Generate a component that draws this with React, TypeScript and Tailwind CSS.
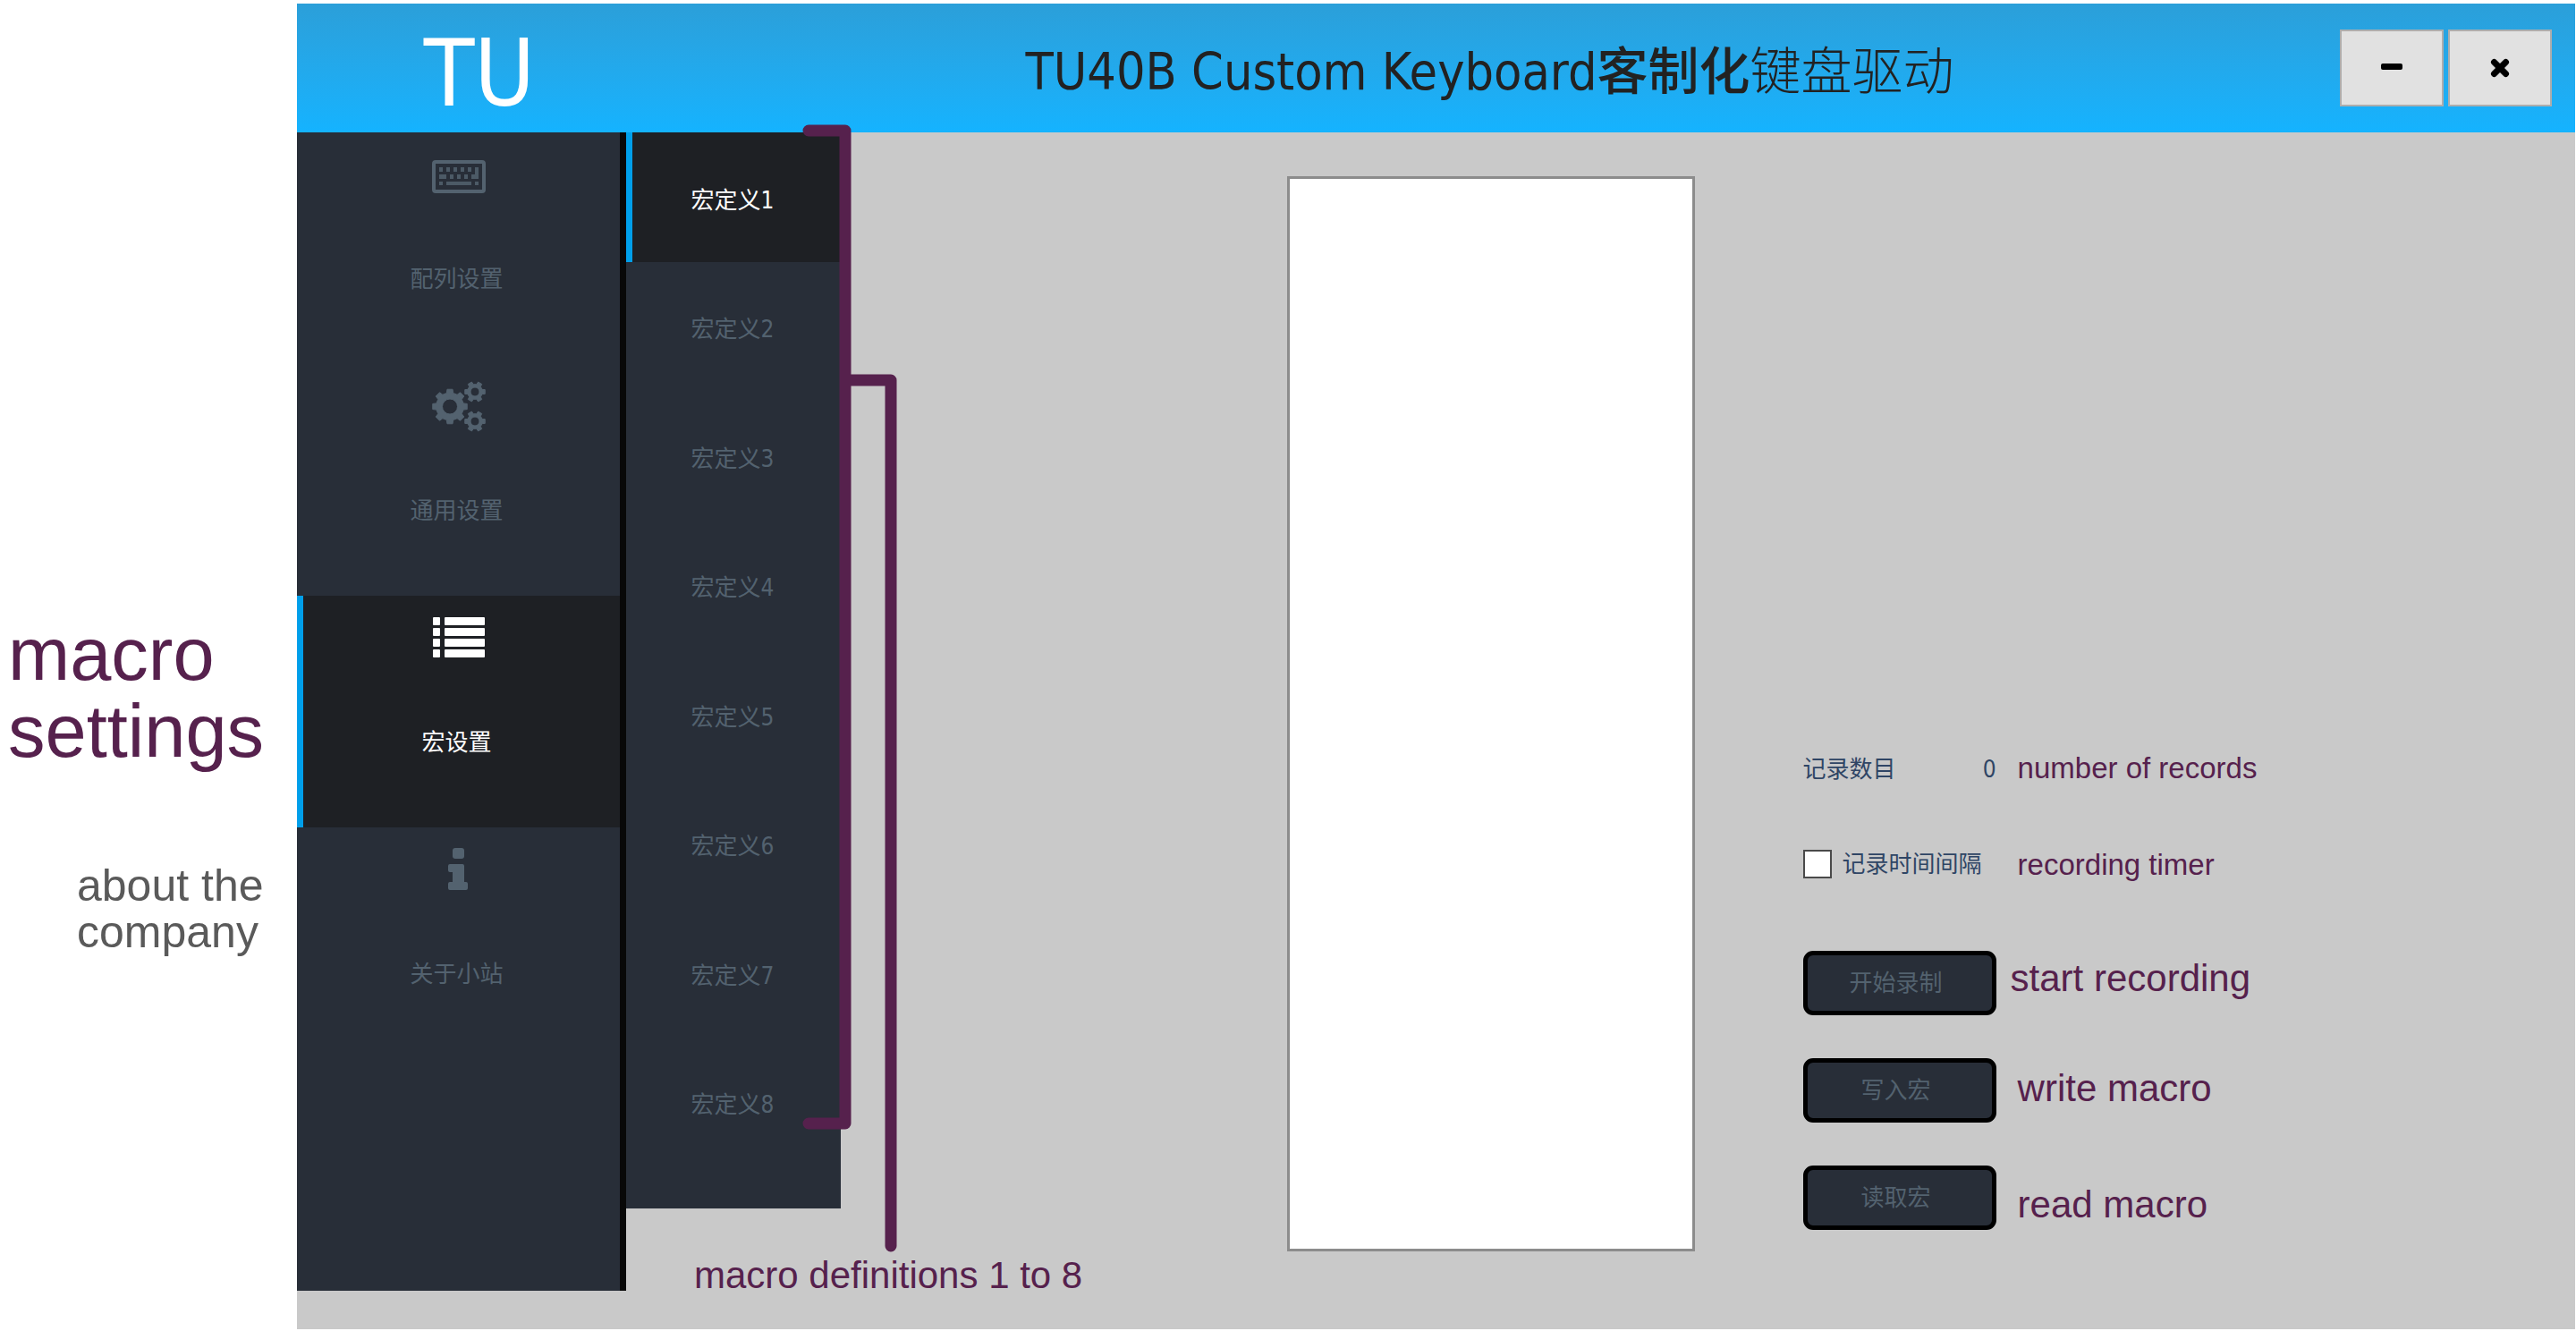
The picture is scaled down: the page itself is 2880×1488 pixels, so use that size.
import React from "react";

const UI_FONT = "font-['DejaVu_Sans_Condensed','DejaVu_Sans','Noto_Sans_CJK_SC',sans-serif]";
const NOTE_FONT = "font-['Liberation_Sans',Arial,sans-serif]";

/** Outline of a toothed wheel with a round hole, for fill-rule evenodd. */
function gearPath(cx: number, cy: number, outer: number, root: number, hole: number, teeth: number) {
  const step = (Math.PI * 2) / teeth;
  const points: string[] = [];
  for (let i = 0; i < teeth; i++) {
    const a = i * step;
    const corners: [number, number][] = [
      [root, -0.3],
      [outer, -0.2],
      [outer, 0.2],
      [root, 0.3],
    ];
    for (const [r, k] of corners) {
      points.push(`${(cx + r * Math.cos(a + k * step)).toFixed(2)} ${(cy + r * Math.sin(a + k * step)).toFixed(2)}`);
    }
  }
  return `M${points.join("L")}ZM${cx - hole} ${cy}a${hole} ${hole} 0 1 0 ${hole * 2} 0a${hole} ${hole} 0 1 0 ${-hole * 2} 0Z`;
}

function Icon({ children }: { children: React.ReactNode }) {
  return (
    <svg viewBox="0 0 60 60" className="h-[60px] w-[60px]" fill="currentColor" aria-hidden="true">
      {children}
    </svg>
  );
}

const KeyboardIcon = () => (
  <Icon>
    <rect x="2" y="14" width="56" height="33" rx="2" fill="none" stroke="currentColor" strokeWidth="4" />
    <g opacity="0.85">
      {[8, 16, 24, 32, 40].map((x) => (
        <rect key={x} x={x} y="20" width="4" height="5" />
      ))}
      <rect x="8" y="28" width="8" height="5" />
      {[20, 28, 36].map((x) => (
        <rect key={x} x={x} y="28" width="4" height="5" />
      ))}
      <path d="M48 20h4v13h-8v-5h4z" />
      <rect x="8" y="36" width="4" height="4" />
      <rect x="16" y="36" width="28" height="4" />
      <rect x="48" y="36" width="4" height="4" />
    </g>
  </Icon>
);

const GearsIcon = () => (
  <Icon>
    <path
      fillRule="evenodd"
      stroke="currentColor"
      strokeWidth="1"
      strokeLinejoin="round"
      d={gearPath(20, 28.5, 19.5, 15.5, 8.5, 8) + gearPath(48, 12, 11.5, 8.5, 5, 6) + gearPath(48, 45, 11.5, 8.5, 5, 6)}
    />
  </Icon>
);

const ListIcon = () => (
  <Icon>
    {[5, 17, 29, 41].map((y) => (
      <g key={y}>
        <rect x="1" y={y} width="8" height="9" rx="1" />
        <rect x="14" y={y} width="45" height="9" rx="1" />
      </g>
    ))}
  </Icon>
);

const InfoIcon = () => (
  <Icon>
    <rect x="23" y="4" width="13" height="12" rx="3" />
    <path d="M20 22h14a2 2 0 0 1 2 2v18h2a2 2 0 0 1 2 2v5a2 2 0 0 1-2 2H20a2 2 0 0 1-2-2v-5a2 2 0 0 1 2-2h3V31h-3a2 2 0 0 1-2-2v-5a2 2 0 0 1 2-2z" />
  </Icon>
);

const NAV = [
  { label: "配列设置", icon: KeyboardIcon, active: false },
  { label: "通用设置", icon: GearsIcon, active: false },
  { label: "宏设置", icon: ListIcon, active: true },
  { label: "关于小站", icon: InfoIcon, active: false },
];

const MACROS = [1, 2, 3, 4, 5, 6, 7, 8];
const ACTIONS = ["开始录制", "写入宏", "读取宏"];

function Header() {
  return (
    <header className="flex h-36 items-center bg-linear-to-b from-[#2b9fd9] to-[#14b3ff]">
      <div className="flex w-[408px] justify-center pt-3 text-[103px] leading-[120px] text-white">
        <span>TU</span>
      </div>
      <h1 className="flex-1 pt-2 text-center text-[57px] leading-[72px] whitespace-nowrap text-[#222222]">
        TU40B Custom Keyboard<span className="font-medium">客制化</span>
        <span className="font-light">键盘驱动</span>
      </h1>
      <div className="flex w-[288px] justify-end gap-[5px] pr-[26px]">
        <button type="button" aria-label="最小化" className="flex h-[86px] w-[116px] items-center justify-center border-2 border-[#adadad] bg-[#e1e1e1] text-black">
          <svg viewBox="0 0 24 24" className="h-6 w-6" fill="currentColor" aria-hidden="true">
            <rect x="0" y="7" width="24" height="7" rx="2" />
          </svg>
        </button>
        <button type="button" aria-label="关闭" className="flex h-[86px] w-[116px] items-center justify-center border-2 border-[#adadad] bg-[#e1e1e1] text-black">
          <svg viewBox="0 0 24 24" className="h-6 w-6" fill="none" stroke="currentColor" strokeWidth="7" strokeLinecap="round" aria-hidden="true">
            <path d="M5.500 5.500L18.500 18.500M18.500 5.500L5.500 18.500" />
          </svg>
        </button>
      </div>
    </header>
  );
}

function Sidebar() {
  return (
    <nav className="h-[1295px] w-[368px] shrink-0 border-r-[7px] border-[#080808] bg-[#282e38]">
      {NAV.map(({ label, icon: Glyph, active }) => (
        <button
          key={label}
          type="button"
          className={
            active
              ? "flex h-[259px] w-full flex-col items-center border-l-[7px] border-[#009fea] bg-[#1e2024] pt-[19px] pr-[7px] text-white"
              : "flex h-[259px] w-full flex-col items-center pt-[19px] text-[#53626f]"
          }
        >
          <Glyph />
          <span className="mt-[65px] pr-1 text-[26px] leading-10">{label}</span>
        </button>
      ))}
    </nav>
  );
}

function MacroList() {
  return (
    <div className="w-60 shrink-0">
      <div className="h-[1203px] bg-[#282e38]">
        <div className="flex h-[1156px] flex-col">
          {MACROS.map((n) => (
            <button
              key={n}
              type="button"
              className={
                n === 1
                  ? "flex-1 border-l-[7px] border-[#009fea] bg-[#1e2024] pt-2 pr-[9px] text-[26px] text-white"
                  : "flex-1 pt-2 pr-[2px] text-[26px] text-[#53626f]"
              }
            >
              宏定义{n}
            </button>
          ))}
        </div>
      </div>
      <p className={`mt-[51px] ml-[76px] text-[42px] leading-[48px] whitespace-nowrap text-[#56214d] ${NOTE_FONT}`}>
        macro definitions 1 to 8
      </p>
    </div>
  );
}

function RecordPanel() {
  return (
    <section className="flex gap-4">
      <div className="w-[216px] pt-[692px] text-[26px] leading-10 text-[#2f4565]">
        <div className="flex justify-between">
          <span>记录数目</span>
          <output>0</output>
        </div>
        <label className="mt-[66px] flex items-center gap-3 whitespace-nowrap">
          <input type="checkbox" className="h-8 w-8 shrink-0 appearance-none border-2 border-[#4a4a4a] bg-white" />
          记录时间间隔
        </label>
        <div className="mt-[77px] flex flex-col gap-12">
          {ACTIONS.map((a) => (
            <button key={a} type="button" className="h-[72px] rounded-[11px] border-[5px] border-black bg-[#282e38] pr-2 text-[#53626f]">
              {a}
            </button>
          ))}
        </div>
      </div>
      <div className={`pt-[691px] whitespace-nowrap text-[#56214d] ${NOTE_FONT}`}>
        <p className="pl-2 text-[33px] leading-10">number of records</p>
        <p className="mt-[68px] pl-2 text-[33px] leading-10">recording timer</p>
        <p className="mt-[83px] text-[42px] leading-[48px]">start recording</p>
        <p className="mt-[75px] pl-2 text-[42px] leading-[48px]">write macro</p>
        <p className="mt-[82px] pl-2 text-[42px] leading-[48px]">read macro</p>
      </div>
    </section>
  );
}

export default function App() {
  return (
    <div className={`relative flex min-h-screen bg-white pt-1 pr-px pb-[2px] ${UI_FONT}`}>
      <aside className={`w-[332px] shrink-0 pt-[685px] ${NOTE_FONT}`}>
        <p className="pl-[9px] text-[83px] leading-[86px] text-[#56214d]">
          macro
          <br />
          settings
        </p>
        <p className="mt-[103px] pl-[86px] text-[50px] leading-[52px] text-[#5a5a5a]">
          about the
          <br />
          company
        </p>
      </aside>
      <div className="flex min-w-0 flex-1 flex-col bg-[#c9c9c9]">
        <Header />
        <main className="flex flex-1 items-start">
          <Sidebar />
          <MacroList />
          <div className="flex flex-1 items-start justify-center gap-[121px] pl-[143px]">
            <textarea aria-label="宏记录" className="mt-[49px] h-[1202px] w-[456px] resize-none border-[3px] border-[#8c8c8c] bg-white" />
            <RecordPanel />
          </div>
        </main>
      </div>
      <svg
        className="pointer-events-none absolute top-[132px] left-[890px] h-[1280px] w-[120px]"
        viewBox="0 0 120 1280"
        fill="none"
        stroke="#56214d"
        strokeWidth="13"
        strokeLinecap="round"
        strokeLinejoin="round"
        aria-hidden="true"
      >
        <path d="M14 14H55V1124H14M55 293H106V1261" />
      </svg>
    </div>
  );
}
